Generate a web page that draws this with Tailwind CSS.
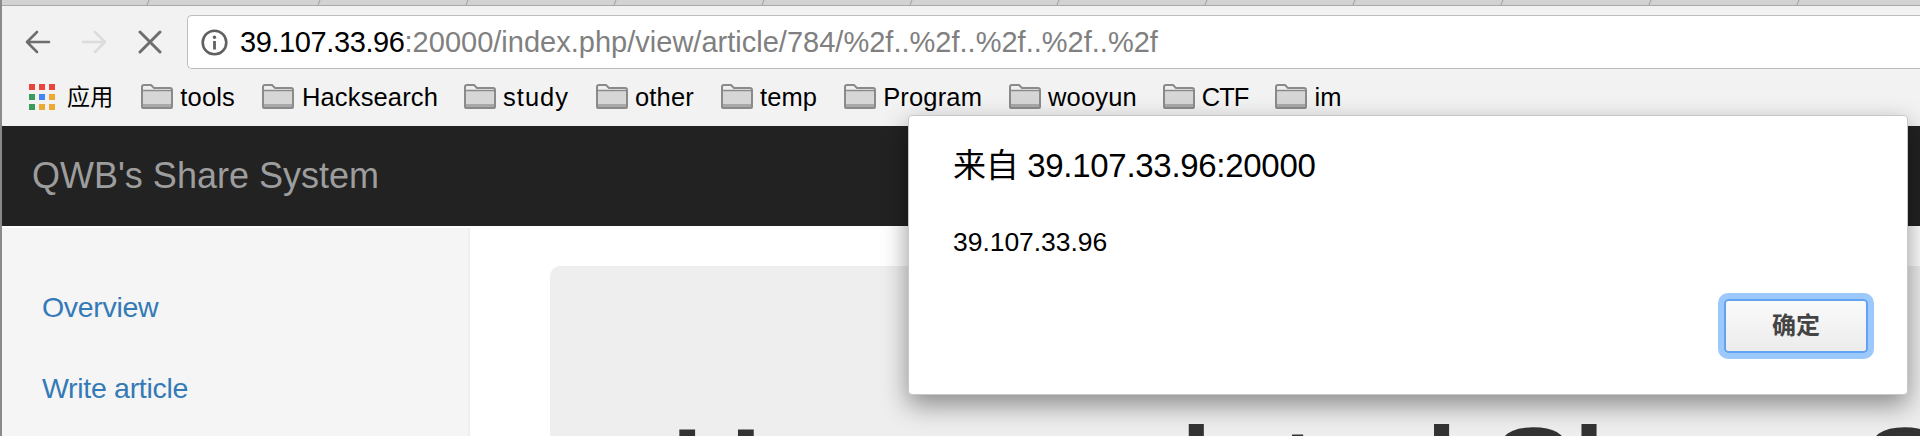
<!DOCTYPE html>
<html lang="en">
<head>
  <meta charset="UTF-8" />
  <title>QWB's Share System</title>
  <script src="https://cdn.jsdelivr.net/npm/@tailwindcss/browser@4"></script>
</head>
<body class="h-[436px] w-[1920px] overflow-hidden bg-white font-['Liberation_Sans','Noto_Sans_CJK_SC',sans-serif]">
  <div class="relative flex h-[436px] flex-col border-l-[2px] border-[#8a8a8a]">
    <!-- Tab strip remnant -->
    <svg class="h-[6px] w-full shrink-0 bg-[#d2d2d2]" viewBox="0 0 1918 6" fill="none" stroke-width="1">
      <path stroke="#9f9f9f" d="M147 0l-2 5M318 0l-2 5M466 0l-2 5M614 0l-2 5M762 0l-2 5M910 0l-2 5M1057 0l-2 5M1205 0l-2 5M1353 0l-2 5M1501 0l-2 5M1649 0l-2 5M1797 0l-2 5"/>
      <path stroke="#a9a9a9" d="M0 5.500h1918"/>
    </svg>

    <!-- Address bar row -->
    <div class="flex h-[64px] shrink-0 items-center bg-[#f2f2f2] pt-[9px] pb-[1px]">
      <svg class="ml-[23px] h-[24px] w-[26px]" viewBox="0 0 26 24" fill="none" stroke="#6e6e6e" stroke-width="2.6" stroke-linecap="round" stroke-linejoin="round"><path d="M2 12h22M12 2 2 12l10 10"/></svg>
      <svg class="ml-[30px] h-[24px] w-[26px]" viewBox="0 0 26 24" fill="none" stroke="#dcdcdc" stroke-width="2.6" stroke-linecap="round" stroke-linejoin="round"><path d="M2 12h22M14 2l10 10-10 10"/></svg>
      <svg class="ml-[31px] h-[24px] w-[24px]" viewBox="0 0 24 24" fill="none" stroke="#6e6e6e" stroke-width="3" stroke-linecap="round"><path d="M2 2l20 20M22 2 2 22"/></svg>
      <div class="ml-[25px] flex h-[54px] flex-1 items-center rounded-l-[5px] border border-r-0 border-[#bdbdbd] bg-white pl-[13px]">
        <svg class="h-[27px] w-[27px]" viewBox="0 0 27 27" fill="none"><circle cx="13.5" cy="13.5" r="11.8" stroke="#606060" stroke-width="2.6"/><circle cx="13.5" cy="8.2" r="1.7" fill="#606060"/><path d="M13.5 12v8.500" stroke="#606060" stroke-width="2.800"/></svg>
        <span class="ml-[12px] pt-[2px] text-[29px] tracking-[-0.4px] whitespace-nowrap text-black">39.107.33.96<span class="tracking-[0.01px] text-[#808080]">:20000/index.php/view/article/784/%2f..%2f..%2f..%2f..%2f</span></span>
      </div>
    </div>

    <!-- Bookmarks bar -->
    <div class="flex h-[56px] shrink-0 items-center bg-[#f2f2f2] pb-[2px] text-[25.5px] tracking-[0.15px] text-black">
      <div class="mb-[1px] ml-[27px] grid grid-cols-3 gap-[4px]">
        <i class="h-[6px] w-[6px] bg-[#e8453c]"></i><i class="h-[6px] w-[6px] bg-[#e8453c]"></i><i class="h-[6px] w-[6px] bg-[#e8453c]"></i>
        <i class="h-[6px] w-[6px] bg-[#3a9b5c]"></i><i class="h-[6px] w-[6px] bg-[#4285f4]"></i><i class="h-[6px] w-[6px] bg-[#eea934]"></i>
        <i class="h-[6px] w-[6px] bg-[#3a9b5c]"></i><i class="h-[6px] w-[6px] bg-[#eea934]"></i><i class="h-[6px] w-[6px] bg-[#eea934]"></i>
      </div>
      <span class="ml-[12px] text-[23px]">应用</span>
      <div class="ml-[28px] flex items-center gap-[7px]"><svg class="mb-[1px] h-[25px] w-[32px]" viewBox="0 0 32 25" fill="none"><path d="M1 23V3q0-2 2-2h7l3 3h16q2 0 2 2v17q0 1-1 1H2q-1 0-1-1Z" fill="#efefef" stroke="#8a8a8a" stroke-width="2"/><path d="M2 7h28v13H2Z" fill="#d6d6d6"/><path d="M2 6.500h28" stroke="#8a8a8a" stroke-width="1.500"/><path d="M2 21.500h28" stroke="#a8a8a8" stroke-width="3"/></svg>tools</div>
      <div class="ml-[27px] flex items-center gap-[8px]"><svg class="mb-[1px] h-[25px] w-[32px]" viewBox="0 0 32 25" fill="none"><path d="M1 23V3q0-2 2-2h7l3 3h16q2 0 2 2v17q0 1-1 1H2q-1 0-1-1Z" fill="#efefef" stroke="#8a8a8a" stroke-width="2"/><path d="M2 7h28v13H2Z" fill="#d6d6d6"/><path d="M2 6.500h28" stroke="#8a8a8a" stroke-width="1.500"/><path d="M2 21.500h28" stroke="#a8a8a8" stroke-width="3"/></svg>Hacksearch</div>
      <div class="ml-[26px] flex items-center gap-[7px] tracking-[1px]"><svg class="mb-[1px] h-[25px] w-[32px]" viewBox="0 0 32 25" fill="none"><path d="M1 23V3q0-2 2-2h7l3 3h16q2 0 2 2v17q0 1-1 1H2q-1 0-1-1Z" fill="#efefef" stroke="#8a8a8a" stroke-width="2"/><path d="M2 7h28v13H2Z" fill="#d6d6d6"/><path d="M2 6.500h28" stroke="#8a8a8a" stroke-width="1.500"/><path d="M2 21.500h28" stroke="#a8a8a8" stroke-width="3"/></svg>study</div>
      <div class="ml-[27px] flex items-center gap-[7px]"><svg class="mb-[1px] h-[25px] w-[32px]" viewBox="0 0 32 25" fill="none"><path d="M1 23V3q0-2 2-2h7l3 3h16q2 0 2 2v17q0 1-1 1H2q-1 0-1-1Z" fill="#efefef" stroke="#8a8a8a" stroke-width="2"/><path d="M2 7h28v13H2Z" fill="#d6d6d6"/><path d="M2 6.500h28" stroke="#8a8a8a" stroke-width="1.500"/><path d="M2 21.500h28" stroke="#a8a8a8" stroke-width="3"/></svg>other</div>
      <div class="ml-[27px] flex items-center gap-[7px]"><svg class="mb-[1px] h-[25px] w-[32px]" viewBox="0 0 32 25" fill="none"><path d="M1 23V3q0-2 2-2h7l3 3h16q2 0 2 2v17q0 1-1 1H2q-1 0-1-1Z" fill="#efefef" stroke="#8a8a8a" stroke-width="2"/><path d="M2 7h28v13H2Z" fill="#d6d6d6"/><path d="M2 6.500h28" stroke="#8a8a8a" stroke-width="1.500"/><path d="M2 21.500h28" stroke="#a8a8a8" stroke-width="3"/></svg>temp</div>
      <div class="ml-[27px] flex items-center gap-[7px]"><svg class="mb-[1px] h-[25px] w-[32px]" viewBox="0 0 32 25" fill="none"><path d="M1 23V3q0-2 2-2h7l3 3h16q2 0 2 2v17q0 1-1 1H2q-1 0-1-1Z" fill="#efefef" stroke="#8a8a8a" stroke-width="2"/><path d="M2 7h28v13H2Z" fill="#d6d6d6"/><path d="M2 6.500h28" stroke="#8a8a8a" stroke-width="1.500"/><path d="M2 21.500h28" stroke="#a8a8a8" stroke-width="3"/></svg>Program</div>
      <div class="ml-[27px] flex items-center gap-[7px]"><svg class="mb-[1px] h-[25px] w-[32px]" viewBox="0 0 32 25" fill="none"><path d="M1 23V3q0-2 2-2h7l3 3h16q2 0 2 2v17q0 1-1 1H2q-1 0-1-1Z" fill="#efefef" stroke="#8a8a8a" stroke-width="2"/><path d="M2 7h28v13H2Z" fill="#d6d6d6"/><path d="M2 6.500h28" stroke="#8a8a8a" stroke-width="1.500"/><path d="M2 21.500h28" stroke="#a8a8a8" stroke-width="3"/></svg>wooyun</div>
      <div class="ml-[26px] flex items-center gap-[7px] tracking-[-1px]"><svg class="mb-[1px] h-[25px] w-[32px]" viewBox="0 0 32 25" fill="none"><path d="M1 23V3q0-2 2-2h7l3 3h16q2 0 2 2v17q0 1-1 1H2q-1 0-1-1Z" fill="#efefef" stroke="#8a8a8a" stroke-width="2"/><path d="M2 7h28v13H2Z" fill="#d6d6d6"/><path d="M2 6.500h28" stroke="#8a8a8a" stroke-width="1.500"/><path d="M2 21.500h28" stroke="#a8a8a8" stroke-width="3"/></svg>CTF</div>
      <div class="ml-[27px] flex items-center gap-[7px]"><svg class="mb-[1px] h-[25px] w-[32px]" viewBox="0 0 32 25" fill="none"><path d="M1 23V3q0-2 2-2h7l3 3h16q2 0 2 2v17q0 1-1 1H2q-1 0-1-1Z" fill="#efefef" stroke="#8a8a8a" stroke-width="2"/><path d="M2 7h28v13H2Z" fill="#d6d6d6"/><path d="M2 6.500h28" stroke="#8a8a8a" stroke-width="1.500"/><path d="M2 21.500h28" stroke="#a8a8a8" stroke-width="3"/></svg>im</div>
    </div>

    <!-- Site navbar -->
    <div class="flex h-[100px] shrink-0 items-center bg-[#222222] pl-[30px] text-[36px] text-[#9d9d9d]">QWB's Share System</div>

    <!-- Sidebar and content -->
    <div class="flex flex-1 overflow-hidden">
      <div class="mt-[2px] w-[468px] shrink-0 border-r-[2px] border-[#eeeeee] bg-[#f5f5f5] pt-[58px] pl-[40px] text-[28.5px] tracking-[-0.3px] text-[#337ab7]">
        <div class="h-[81px]">Overview</div>
        <div>Write article</div>
      </div>
      <div class="flex-1 overflow-hidden pt-[40px] pl-[80px]">
        <div class="h-[300px] rounded-tl-[10px] bg-[#eeeeee] pt-[146px] pl-[121px] text-[126px] leading-none whitespace-nowrap text-[#333333] [-webkit-text-stroke:4px_#333333]">Have updated Share System</div>
      </div>
    </div>

    <!-- JS alert dialog -->
    <div class="absolute top-[115px] left-[906px] flex h-[280px] w-[1000px] flex-col rounded-[4px] border border-[#c8c8c8] bg-white shadow-[0_10px_26px_rgba(0,0,0,0.42)]">
      <div class="pt-[25px] pl-[44px] text-[33px] tracking-[-0.3px] text-black">来自 39.107.33.96:20000</div>
      <div class="pt-[32px] pl-[44px] text-[26.5px] tracking-[-0.05px] text-black">39.107.33.96</div>
      <div class="mt-auto flex justify-end pr-[39px] pb-[41px]">
        <button class="flex h-[54px] w-[144px] items-center justify-center rounded-[4px] border-[2px] border-[#62a2f2] bg-gradient-to-b from-[#fafafa] to-[#ececec] text-[24px] font-bold text-[#444444] outline-[6px] outline-[#9cc9fb]">确定</button>
      </div>
    </div>
  </div>
</body>
</html>
